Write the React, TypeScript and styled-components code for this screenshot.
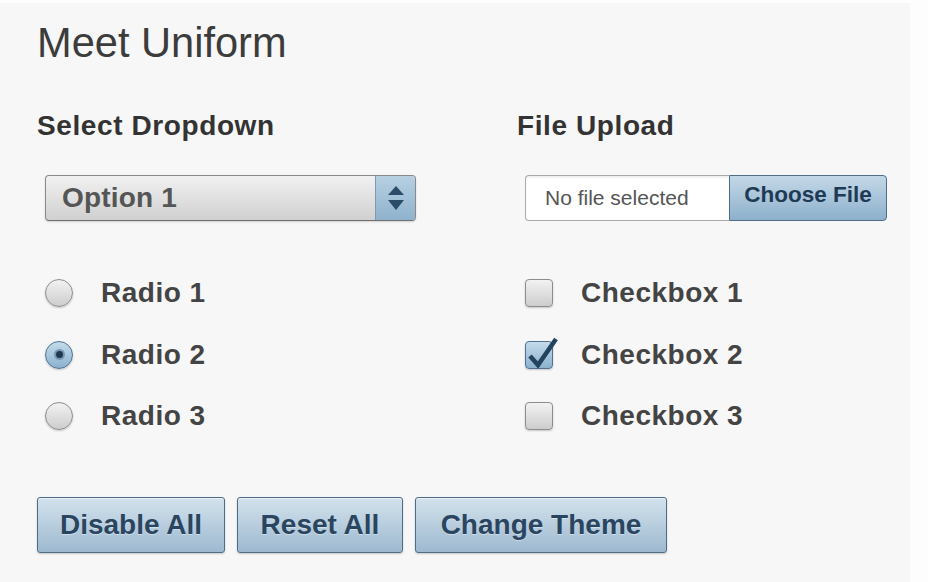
import React from "react";
import styled, { createGlobalStyle } from "styled-components";

const Global = createGlobalStyle`
  html, body { margin: 0; padding: 0; background: #fdfdfd; }
  body { font-family: "Liberation Sans", Arial, sans-serif; }
`;

const Page = styled.div`
  width: 910px;
  height: 579px;
  margin-top: 3px;
  background: #f7f7f7;
  box-sizing: border-box;
  padding: 19px 0 0 37px;
`;

const Title = styled.h1`
  margin: 0;
  font-size: 41.6px;
  line-height: 41px;
  font-weight: normal;
  color: #3c3c3c;
`;

const Columns = styled.div`
  display: grid;
  grid-template-columns: 480px 400px;
  margin-top: 49px;
`;

const Column = styled.div`
  display: flex;
  flex-direction: column;
`;

const Heading = styled.h2`
  margin: 0;
  font-size: 28px;
  line-height: 1;
  font-weight: bold;
  letter-spacing: 0.6px;
  color: #333;
`;

const Controls = styled.div`
  padding-left: 8px;
  margin-top: 35px;
  display: flex;
  flex-direction: column;
`;

const Select = styled.div`
  width: 371px;
  height: 46px;
  box-sizing: border-box;
  display: flex;
  border: 1px solid #8a8a8a;
  border-bottom-color: #6f6f6f;
  border-radius: 4px;
  overflow: hidden;
  background: linear-gradient(#f1f1f1, #d0d0d0);
  box-shadow: 0 1px 2px rgba(0, 0, 0, 0.15);
`;

const SelectText = styled.div`
  flex: 1;
  display: flex;
  align-items: center;
  padding-left: 16px;
  font-size: 28px;
  font-weight: bold;
  color: #555;
  letter-spacing: 0.2px;
`;

const SelectArrows = styled.div`
  width: 39px;
  border-left: 1px solid #7d9ab3;
  background: linear-gradient(#b7d0e2, #8fb2cd);
  display: flex;
  align-items: center;
  justify-content: center;
`;

const Upload = styled.div`
  width: 362px;
  height: 46px;
  box-sizing: border-box;
  display: flex;
`;

const FileName = styled.div`
  width: 204px;
  box-sizing: border-box;
  background: #fff;
  border: 1px solid #aaa;
  border-right: none;
  border-radius: 4px 0 0 4px;
  box-shadow: inset 0 2px 2px rgba(0, 0, 0, 0.06);
  display: flex;
  align-items: center;
  padding-left: 19px;
  font-size: 21px;
  color: #555;
`;

const ChooseButton = styled.div`
  flex: 1;
  box-sizing: border-box;
  border: 1px solid #4f6d88;
  border-radius: 0 4px 4px 0;
  background: linear-gradient(#c3d8e7, #8db0cc);
  display: flex;
  align-items: center;
  justify-content: center;
  padding-bottom: 6px;
  font-size: 22.5px;
  font-weight: bold;
  color: #1e3a55;
`;

const OptionList = styled.div`
  margin-top: 58px;
  display: flex;
  flex-direction: column;
  gap: 33.5px;
`;

const OptionRow = styled.label`
  display: flex;
  align-items: center;
  gap: 28px;
  height: 28px;
  font-size: 28px;
  font-weight: bold;
  color: #444;
  letter-spacing: 0.5px;
`;

const RadioCircle = styled.span<{ $checked?: boolean }>`
  width: 28px;
  height: 28px;
  box-sizing: border-box;
  border-radius: 50%;
  border: 1px solid ${(p) => (p.$checked ? "#4f7292" : "#8d8d8d")};
  background: ${(p) =>
    p.$checked
      ? "linear-gradient(#c4dbeb, #8cb1ce)"
      : "linear-gradient(#f2f2f2, #cdcdcd)"};
  box-shadow: 0 1px 2px rgba(0, 0, 0, 0.2);
  display: flex;
  align-items: center;
  justify-content: center;
  flex: none;
`;

const RadioDot = styled.span`
  width: 7px;
  height: 7px;
  border-radius: 50%;
  background: #1f3850;
  box-shadow: 0 0 0 2px #7898b2;
`;

const CheckSquare = styled.span<{ $checked?: boolean }>`
  position: relative;
  width: 28px;
  height: 28px;
  box-sizing: border-box;
  border-radius: 4px;
  border: 1px solid ${(p) => (p.$checked ? "#4f7292" : "#8d8d8d")};
  background: ${(p) =>
    p.$checked
      ? "linear-gradient(#c4dbeb, #8cb1ce)"
      : "linear-gradient(#f2f2f2, #cdcdcd)"};
  box-shadow: 0 1px 2px rgba(0, 0, 0, 0.2);
  flex: none;
`;

const CheckMark = styled.svg`
  position: absolute;
  left: 0;
  top: -6px;
  overflow: visible;
`;

const ButtonBar = styled.div`
  margin-top: 67px;
  display: flex;
  gap: 12px;
`;

const Button = styled.button<{ $width: number }>`
  width: ${(p) => p.$width}px;
  height: 56px;
  box-sizing: border-box;
  border: 1px solid #4f6d88;
  border-radius: 3px;
  background: linear-gradient(#d3e2ec, #9db9d0);
  box-shadow: 0 1px 2px rgba(0, 0, 0, 0.2), inset 0 1px 0 rgba(255, 255, 255, 0.5);
  font-family: "Liberation Sans", Arial, sans-serif;
  font-size: 28px;
  font-weight: bold;
  color: #2a4560;
  text-shadow: 0 1px 0 rgba(255, 255, 255, 0.4);
  padding: 0;
  cursor: pointer;
`;

export default function App() {
  return (
    <>
      <Global />
      <Page>
        <Title>Meet Uniform</Title>
        <Columns>
          <Column>
            <Heading>Select Dropdown</Heading>
            <Controls>
              <Select>
                <SelectText>Option 1</SelectText>
                <SelectArrows>
                  <svg width="18" height="26" viewBox="0 0 18 26">
                    <polygon points="9,1 17,10 1,10" fill="#2b4c69" />
                    <polygon points="1,15 17,15 9,25" fill="#2b4c69" />
                  </svg>
                </SelectArrows>
              </Select>
              <OptionList>
                <OptionRow>
                  <RadioCircle />
                  Radio 1
                </OptionRow>
                <OptionRow>
                  <RadioCircle $checked>
                    <RadioDot />
                  </RadioCircle>
                  Radio 2
                </OptionRow>
                <OptionRow>
                  <RadioCircle />
                  Radio 3
                </OptionRow>
              </OptionList>
            </Controls>
          </Column>
          <Column>
            <Heading>File Upload</Heading>
            <Controls>
              <Upload>
                <FileName>No file selected</FileName>
                <ChooseButton>Choose File</ChooseButton>
              </Upload>
              <OptionList>
                <OptionRow>
                  <CheckSquare />
                  Checkbox 1
                </OptionRow>
                <OptionRow>
                  <CheckSquare $checked>
                    <CheckMark width="32" height="34" viewBox="0 0 32 34">
                      <path
                        d="M4 20 L12 29 L30 3"
                        fill="none"
                        stroke="#24435f"
                        strokeWidth="4.5"
                        strokeLinejoin="miter"
                      />
                    </CheckMark>
                  </CheckSquare>
                  Checkbox 2
                </OptionRow>
                <OptionRow>
                  <CheckSquare />
                  Checkbox 3
                </OptionRow>
              </OptionList>
            </Controls>
          </Column>
        </Columns>
        <ButtonBar>
          <Button $width={188}>Disable All</Button>
          <Button $width={166}>Reset All</Button>
          <Button $width={252}>Change Theme</Button>
        </ButtonBar>
      </Page>
    </>
  );
}
